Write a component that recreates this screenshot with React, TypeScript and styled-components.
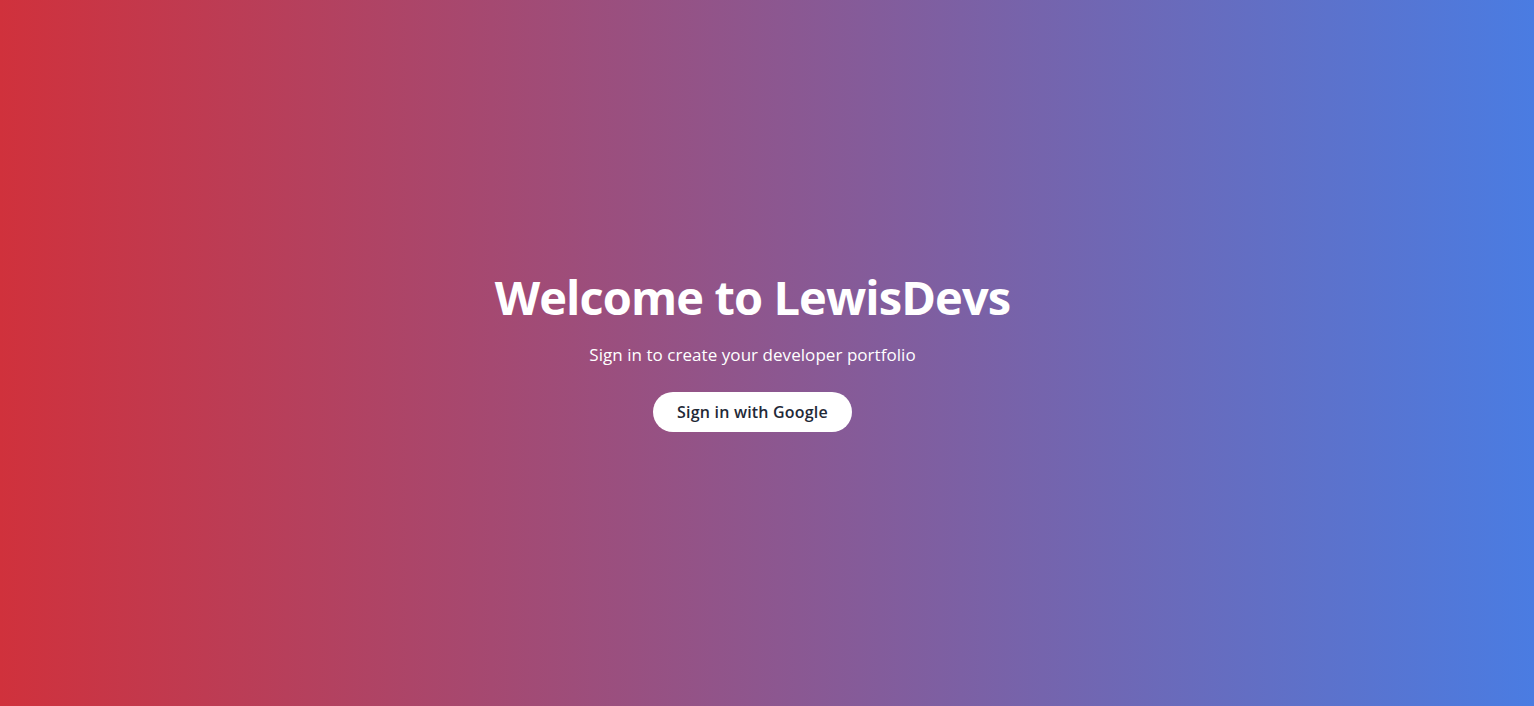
import React from "react";
import styled, { createGlobalStyle } from "styled-components";

const GlobalStyle = createGlobalStyle`
  html, body {
    margin: 0;
    padding: 0;
    height: 100%;
  }
  body {
    font-family: "Open Sans", "Noto Sans", sans-serif;
  }
  #root {
    height: 100%;
  }
`;

const Page = styled.main`
  min-height: 100vh;
  display: flex;
  flex-direction: column;
  align-items: center;
  justify-content: center;
  background: linear-gradient(to right, #d0313c, #4a7ce2);
  color: #ffffff;
  text-align: center;
  box-sizing: border-box;
  padding: 0 29px 5px 0;
`;

const Title = styled.h1`
  margin: 0 0 17px;
  font-size: 47px;
  line-height: 1.2;
  font-weight: 700;
  letter-spacing: -0.9px;
`;

const Subtitle = styled.p`
  margin: 0 0 24px;
  font-size: 17px;
  line-height: 1.5;
  font-weight: 400;
  letter-spacing: 0.05px;
`;

const GoogleButton = styled.button`
  font-family: inherit;
  font-size: 16px;
  font-weight: 600;
  letter-spacing: 0.2px;
  color: #1f2937;
  background: #ffffff;
  border: none;
  border-radius: 9999px;
  height: 40px;
  padding: 0 24px;
  cursor: pointer;
`;

export default function App() {
  return (
    <>
      <GlobalStyle />
      <Page>
        <Title>Welcome to LewisDevs</Title>
        <Subtitle>Sign in to create your developer portfolio</Subtitle>
        <GoogleButton>Sign in with Google</GoogleButton>
      </Page>
    </>
  );
}
